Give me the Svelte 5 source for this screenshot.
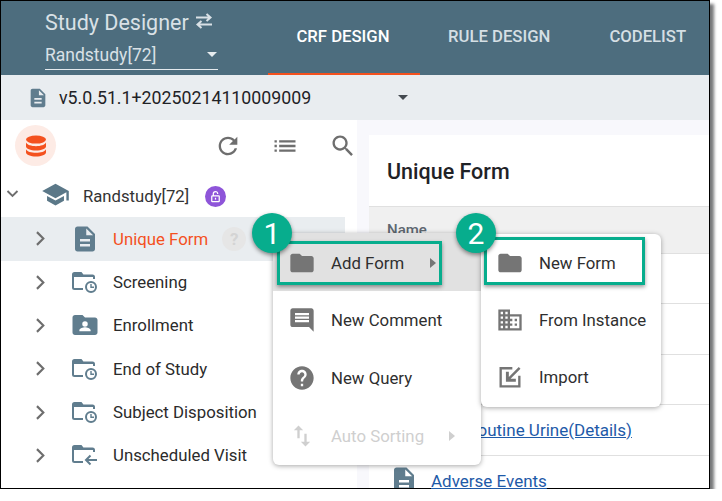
<script lang="ts">
  const icons = {
    file: "M14 2H6c-1.1 0-1.99.9-1.99 2L4 20c0 1.1.89 2 1.99 2H18c1.1 0 2-.9 2-2V8l-6-6zm2 16H8v-2h8v2zm0-4H8v-2h8v2zm-3-5V3.5L18.5 9H13z",
    refresh: "M17.65 6.35C16.2 4.9 14.21 4 12 4c-4.42 0-7.99 3.58-7.99 8s3.57 8 7.99 8c3.73 0 6.84-2.55 7.73-6h-2.08c-.82 2.33-3.04 4-5.65 4-3.31 0-6-2.69-6-6s2.69-6 6-6c1.66 0 3.14.69 4.22 1.78L13 11h7V4l-2.35 2.35z",
    list: "M3 13h2v-2H3v2zm0 4h2v-2H3v2zm0-8h2V7H3v2zm4 4h14v-2H7v2zm0 4h14v-2H7v2zM7 7v2h14V7H7z",
    search: "M15.5 14h-.79l-.28-.27C15.41 12.59 16 11.11 16 9.5 16 5.91 13.09 3 9.5 3S3 5.91 3 9.5 5.91 16 9.5 16c1.61 0 3.09-.59 4.23-1.57l.27.28v.79l5 4.99L20.49 19l-4.99-5zm-6 0C7.01 14 5 11.99 5 9.5S7.01 5 9.5 5 14 7.01 14 9.5 11.99 14 9.5 14z",
    school: "M5 13.18v4L12 21l7-3.82v-4L12 17l-7-3.82zM12 3L1 9l11 6 9-4.91V17h2V9L12 3z",
    folder: "M10 4H4c-1.1 0-1.99.9-1.99 2L2 18c0 1.1.9 2 2 2h16c1.1 0 2-.9 2-2V8c0-1.1-.9-2-2-2h-8l-2-2z",
    person: "M20 6h-8l-2-2H4c-1.1 0-2 .9-2 2v12c0 1.1.9 2 2 2h16c1.1 0 2-.9 2-2V8c0-1.1-.9-2-2-2zm-8 3a2.2 2.2 0 1 1 0 4.4A2.2 2.2 0 0 1 12 9zm4.5 8h-9v-1c0-1.5 3-2.3 4.5-2.3s4.5.8 4.5 2.3v1z",
    comment: "M21.99 4c0-1.1-.89-2-1.99-2H4c-1.1 0-2 .9-2 2v12c0 1.1.9 2 2 2h14l4 4-.01-18zM18 14H6v-2h12v2zm0-3H6V9h12v2zm0-3H6V6h12v2z",
    help: "M12 2C6.48 2 2 6.48 2 12s4.48 10 10 10 10-4.48 10-10S17.52 2 12 2zm1 17h-2v-2h2v2zm2.07-7.75l-.9.92C13.45 12.9 13 13.5 13 15h-2v-.5c0-1.1.45-2.1 1.17-2.83l1.24-1.26c.37-.36.59-.86.59-1.41 0-1.1-.9-2-2-2s-2 .9-2 2H8c0-2.21 1.79-4 4-4s4 1.79 4 4c0 .88-.36 1.68-.93 2.25z",
    sort: "M16 17.01V10h-2v7.01h-3L15 21l4-3.99h-3zM9 3L5 6.99h3V14h2V6.99h3L9 3z",
    domain: "M12 7V3H2v18h20V7H12zM6 19H4v-2h2v2zm0-4H4v-2h2v2zm0-4H4V9h2v2zm0-4H4V5h2v2zm4 12H8v-2h2v2zm0-4H8v-2h2v2zm0-4H8V9h2v2zm0-4H8V5h2v2zm10 12h-8v-2h2v-2h-2v-2h2v-2h-2V9h8v10zm-2-8h-2v2h2v-2zm0 4h-2v2h2v-2z",
    imp: "M19.500 3.500l1.500 1.500-8.500 8.500H17V16H8.500V7.500H11v4.500l8.500-8.500zM3 3.500h11v2H5v13.500h14V11h2v10H3V3.500z",
    swap: "M4 6.500h14.500M14.500 3l4 3.500-4 3.500M20 13.500H5.500M9.500 10l-4 3.500 4 3.500",
  };

  const tree = [
    { name: "Unique Form", icon: "file", active: true },
    { name: "Screening", icon: "clock" },
    { name: "Enrollment", icon: "person" },
    { name: "End of Study", icon: "clock" },
    { name: "Subject Disposition", icon: "clock" },
    { name: "Unscheduled Visit", icon: "back" },
  ];

  const menu1 = [
    { label: "Add Form", icon: "folder", arrow: true, hover: true },
    { label: "New Comment", icon: "comment" },
    { label: "New Query", icon: "help" },
    { label: "Auto Sorting", icon: "sort", arrow: true, off: true },
  ];

  const menu2 = [
    { label: "New Form", icon: "folder" },
    { label: "From Instance", icon: "domain" },
    { label: "Import", icon: "imp" },
  ];
</script>

<div class="frame">
  <header>
    <div class="brand">
      <div class="title">
        Study Designer
        <svg class="swap" viewBox="3 2 18 16"><path d={icons.swap} /></svg>
      </div>
      <div class="picker"><span>Randstudy[72]</span><i class="caret"></i></div>
    </div>
    <nav>
      <a class="on" href="#crf">CRF DESIGN</a>
      <a href="#rule">RULE DESIGN</a>
      <a href="#code">CODELIST</a>
    </nav>
  </header>

  <div class="version">
    <svg class="vfile" viewBox="0 0 24 24"><path d={icons.file} /></svg>
    <span>v5.0.51.1+20250214110009009</span>
    <i class="caret dark"></i>
  </div>

  <div class="body">
    <aside>
      <div class="tools">
        <span class="db">
          <svg viewBox="0 0 24 24">
            <ellipse cx="12" cy="5.600" rx="10" ry="4" />
            <path d="M2 8.600c1 2.400 5.400 3.600 10 3.600s9-1.200 10-3.600v4c0 2.300-4.500 4-10 4s-10-1.700-10-4z" />
            <path d="M2 15.200c1 2.400 5.400 3.600 10 3.600s9-1.200 10-3.600v3.200c0 2.300-4.500 4-10 4s-10-1.700-10-4z" />
          </svg>
        </span>
        <svg class="tool t1" viewBox="0 0 24 24"><path d={icons.refresh} /></svg>
        <svg class="tool t2" viewBox="0 0 24 24"><path d={icons.list} /></svg>
        <svg class="tool t3" viewBox="0 0 24 24"><path d={icons.search} /></svg>
      </div>

      <div class="root">
        <svg class="chev down" viewBox="0 0 24 24"><path d="M4 8l8 8 8-8" /></svg>
        <svg class="school" viewBox="0 0 24 24"><path d={icons.school} /></svg>
        <span class="rname">Randstudy[72]</span>
        <span class="lock">
          <svg viewBox="0 0 24 24"><path d="M7 11h10a1 1 0 0 1 1 1v7a1 1 0 0 1-1 1H7a1 1 0 0 1-1-1v-7a1 1 0 0 1 1-1zM8.500 11V7.500a3.500 3.500 0 0 1 7 0V8" /><path d="M12 14v3" /></svg>
        </span>
      </div>

      {#each tree as row}
        <div class="row" class:active={row.active}>
          <svg class="chev" viewBox="0 0 24 24"><path d="M7 3l9 9-9 9" /></svg>
          {#if row.icon === "clock" || row.icon === "back"}
            <svg class="ficon" viewBox="0 0 28 24">
              <path class="outline" d="M12 19H3.500A1.500 1.500 0 0 1 2 17.500v-13A1.500 1.500 0 0 1 3.500 3H10l2 2.500h9.500A1.500 1.500 0 0 1 23 7v2" />
              <path class="solid" d="M3 3h7l2 2.500h10.500V7H3z" />
              {#if row.icon === "clock"}
                <circle class="outline" cx="20" cy="17" r="5" />
                <path class="outline thin" d="M20 14v3.300h3" />
              {:else}
                <path class="outline" d="M26 17H15M19.500 12.500L15 17l4.500 4.500" />
              {/if}
            </svg>
          {:else}
            <svg class="fsolid" viewBox="0 0 24 24"><path class="solid" d={icons[row.icon]} /></svg>
          {/if}
          <span class="rowname">{row.name}</span>
          {#if row.active}
            <span class="q">?</span>
          {/if}
        </div>
      {/each}
    </aside>

    <section>
      <h2>Unique Form</h2>
      <div class="thead">Name</div>
      <div class="trow"></div>
      <div class="trow"></div>
      <div class="trow"></div>
      <div class="trow link"><a href="#urine">Routine Urine(Details)</a></div>
      <div class="trow link last">
        <svg class="lfile" viewBox="0 0 24 18.400"><path d={icons.file} /></svg>
        <a href="#ae">Adverse Events</a>
      </div>
    </section>
  </div>

  <div class="menu m1">
    {#each menu1 as item}
      <div class="item" class:hover={item.hover} class:off={item.off}>
        <svg viewBox="0 0 24 24"><path d={icons[item.icon]} /></svg>
        <span>{item.label}</span>
        {#if item.arrow}<i class="tri"></i>{/if}
      </div>
    {/each}
  </div>

  <div class="menu m2">
    {#each menu2 as item}
      <div class="item">
        <svg viewBox="0 0 24 24"><path d={icons[item.icon]} /></svg>
        <span>{item.label}</span>
      </div>
    {/each}
  </div>

  <div class="mark b1"></div>
  <div class="mark b2"></div>
  <div class="num n1">1</div>
  <div class="num n2">2</div>
</div>

<style>
  :global(body) {
    margin: 0;
    background: #fff;
    font-family: Roboto, "Liberation Sans", sans-serif;
  }

  .frame {
    position: relative;
    width: 708px;
    height: 487px;
    border: 1px solid #000;
    box-shadow: 4px 4px 3px #77787a;
    background: #fff;
    color: #2b2b2b;
  }

  header {
    display: flex;
    height: 74px;
    background: #4d6d7e;
    overflow: hidden;
  }

  .brand {
    width: 173px;
    margin-left: 44px;
    padding-top: 9px;
    color: #d9e1e6;
  }

  .title {
    display: flex;
    align-items: center;
    gap: 6px;
    height: 24px;
    font-size: 21.500px;
    white-space: nowrap;
  }

  .swap {
    flex: none;
    width: 18px;
    height: 16px;
    margin-top: -3px;
    fill: none;
    stroke: #d9e1e6;
    stroke-width: 2;
  }

  .picker {
    display: flex;
    align-items: center;
    justify-content: space-between;
    height: 27px;
    margin-top: 9px;
    padding-bottom: 3px;
    box-sizing: border-box;
    border-bottom: 1px solid #e4eaee;
    font-size: 17.500px;
  }

  .caret {
    display: block;
    width: 0;
    height: 0;
    margin-right: 1px;
    border: 5.500px solid transparent;
    border-bottom: 0;
    border-top: 5.500px solid #e6ecef;
  }

  .caret.dark {
    border-top-color: #444a50;
  }

  nav {
    display: flex;
    margin-left: 50px;
  }

  nav a {
    display: flex;
    align-items: center;
    height: 71px;
    color: #d5dfe4;
    font-size: 16.700px;
    font-weight: 500;
    text-decoration: none;
    white-space: nowrap;
  }

  nav a + a {
    margin-left: 28px;
  }

  nav a + a + a {
    margin-left: 59px;
  }

  nav a.on {
    justify-content: center;
    width: 152px;
    height: 74px;
    box-sizing: border-box;
    padding: 0 2px 1px 0;
    border-bottom: 2px solid #f4511e;
    color: #fff;
  }

  .version {
    display: flex;
    align-items: center;
    height: 45px;
    background: #e9edf0;
    color: #1f2226;
    font-size: 17.750px;
  }

  .vfile {
    width: 22px;
    height: 22px;
    margin-left: 26px;
    fill: #607d8e;
  }

  .version span {
    margin-left: 10px;
  }

  .version .caret {
    margin-left: 87px;
  }

  .body {
    display: flex;
    height: 368px;
    background: #f8f8fc;
  }

  aside {
    width: 356px;
    flex: none;
    background: #fff;
  }

  .tools {
    display: flex;
    align-items: center;
    height: 55px;
    padding: 0 0 4px 14px;
    box-sizing: border-box;
  }

  .db {
    display: flex;
    align-items: center;
    justify-content: center;
    width: 41px;
    height: 41px;
    border-radius: 50%;
    background: #fdebe5;
  }

  .db svg {
    width: 24px;
    height: 24px;
    fill: #f4511e;
  }

  .tool {
    width: 28px;
    height: 28px;
    fill: #6e6e6e;
  }

  .t1 { margin-left: 158px; }
  .t2 { margin-left: 29px; }
  .t3 { margin-left: 30px; }

  .root {
    display: flex;
    align-items: center;
    height: 42px;
    font-size: 16.700px;
  }

  .chev {
    fill: none;
    stroke: #6e6e6e;
  }

  .chev.down {
    width: 15px;
    height: 15px;
    margin: -5px 0 0 4px;
    stroke-width: 3;
  }

  .school {
    width: 29px;
    height: 29px;
    margin: -3px 0 0 21px;
    fill: #5b7888;
  }

  .rname {
    margin-left: 13px;
    color: #333;
  }

  .lock {
    display: flex;
    align-items: center;
    justify-content: center;
    width: 21px;
    height: 21px;
    margin-left: 16px;
    border-radius: 50%;
    background: #8e55d9;
  }

  .lock svg {
    width: 15px;
    height: 15px;
    fill: none;
    stroke: #fff;
    stroke-width: 2;
  }

  .row {
    display: flex;
    align-items: center;
    width: 344px;
    height: 43.300px;
    font-size: 16.800px;
  }

  .row .chev {
    width: 17px;
    height: 17px;
    margin-left: 31px;
    stroke-width: 3;
  }

  .row.active {
    height: 43.500px;
    background: #e9edf0;
    color: #f4511e;
  }

  .ficon {
    width: 28px;
    height: 24px;
    margin-left: 22px;
    fill: none;
  }

  .fsolid {
    width: 30px;
    height: 30px;
    margin: 0 -1px 0 21px;
  }

  .solid { fill: #607d8e; stroke: none; }
  .outline { fill: none; stroke: #607d8e; stroke-width: 2; }
  .thin { stroke-width: 1.400; }

  .rowname {
    margin-left: 14px;
  }

  .q {
    display: flex;
    align-items: center;
    justify-content: center;
    width: 24px;
    height: 24px;
    margin-left: 14px;
    border-radius: 50%;
    background: #e6e6e6;
    color: #d4d4d4;
    font-size: 17px;
    font-weight: 700;
  }

  section {
    flex: 1;
    margin: 15px 0 0 12px;
    background: #fff;
  }

  h2 {
    display: flex;
    align-items: center;
    height: 72px;
    margin: 0;
    padding: 2px 0 0 18px;
    box-sizing: border-box;
    border-bottom: 1px solid #e0e0e0;
    font-size: 21.500px;
    font-weight: 500;
    color: #1f2226;
  }

  .thead {
    height: 47px;
    padding: 14px 18px 0;
    box-sizing: border-box;
    border-bottom: 1px solid #e0e0e0;
    background: #f0f0f0;
    color: #5e6770;
    font-size: 15px;
    font-weight: 500;
  }

  .trow {
    display: flex;
    align-items: center;
    height: 50.400px;
    box-sizing: border-box;
    border-bottom: 1px solid #e0e0e0;
    padding-left: 24px;
  }

  .trow a {
    color: #1e5aa8;
    font-size: 17px;
    white-space: nowrap;
  }

  .trow.link a {
    margin-left: 74px;
  }

  .trow.last {
    align-items: flex-end;
    height: 32px;
    border-bottom: 0;
  }

  .trow.last a {
    margin-left: 12px;
    line-height: 14px;
  }

  .lfile {
    flex: none;
    width: 30px;
    height: 23px;
    margin-left: -4px;
    fill: #607d8e;
  }

  .menu {
    position: absolute;
    box-sizing: border-box;
    border-radius: 6px;
    background: #fff;
    box-shadow: 0 1px 5px rgba(0, 0, 0, 0.35);
    font-size: 16.800px;
  }

  .m1 {
    left: 272px;
    top: 232px;
    width: 208px;
    height: 232px;
  }

  .m2 {
    left: 480px;
    top: 233px;
    width: 180px;
    height: 173px;
  }

  .item {
    display: flex;
    align-items: center;
    height: 58px;
    position: relative;
    box-sizing: border-box;
    color: #2f2f2f;
  }

  .m2 .item {
    height: 57.300px;
  }

  .item svg {
    width: 28px;
    height: 28px;
    margin-left: 15px;
    fill: #757575;
    flex: none;
  }

  .item span {
    margin-left: 15px;
  }

  .hover {
    padding-top: 2px;
    background: #e1e1e1;
    border-radius: 6px 0 0 0;
  }

  .off {
    color: #cfcfcf;
  }

  .off svg {
    fill: #cfcfcf;
  }

  .tri {
    position: absolute;
    left: 176px;
    width: 0;
    height: 0;
    border: 5.500px solid transparent;
    border-right: 0;
    border-left: 6px solid #cfcfcf;
  }

  .hover .tri {
    left: 157px;
    border-left-color: #757575;
  }

  .mark {
    position: absolute;
    box-sizing: border-box;
    border: 3px solid #07ad8d;
    box-shadow: 0 2px 4px rgba(0, 0, 0, 0.4);
  }

  .b1 {
    left: 276px;
    top: 240px;
    width: 165px;
    height: 44px;
  }

  .b2 {
    left: 483px;
    top: 236px;
    width: 161px;
    height: 48px;
  }

  .num {
    position: absolute;
    display: flex;
    align-items: center;
    justify-content: center;
    width: 40px;
    height: 40px;
    border-radius: 50%;
    background: #07ad8d;
    box-shadow: 0 2px 4px rgba(0, 0, 0, 0.45);
    color: #fff;
    font-size: 30px;
  }

  .n1 { left: 251px; top: 212px; }
  .n2 { left: 455px; top: 212px; }
</style>
